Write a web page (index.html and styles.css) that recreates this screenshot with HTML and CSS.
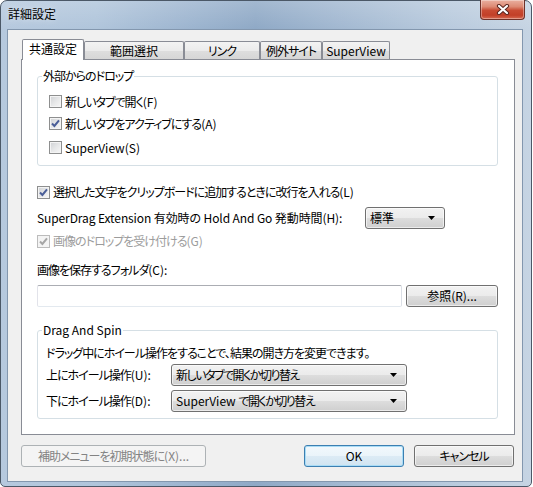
FILE: index.html
```html
<!DOCTYPE html>
<html lang="ja">
<head>
<meta charset="utf-8">
<title>詳細設定</title>
<link rel="stylesheet" href="styles.css">
</head>
<body>
<div class="window">
  <div class="titlebar">
    <span class="title">詳細設定</span>
    <div class="close">
      <svg width="14" height="11" viewBox="0 0 14 11"><path d="M3 2 L11 9 M11 2 L3 9" stroke="#5a2620" stroke-width="4.2" stroke-linecap="round"/><path d="M3 2 L11 9 M11 2 L3 9" stroke="#ffffff" stroke-width="2.2" stroke-linecap="round"/></svg>
    </div>
  </div>
  <div class="client">
    <div class="tabs">
      <div class="tab active">共通設定</div>
      <div class="tab t-range">範囲選択</div>
      <div class="tab t-link ja">リンク</div>
      <div class="tab t-exc ja">例外サイト</div>
      <div class="tab t-sv">SuperView</div>
    </div>
    <div class="panel">
      <fieldset class="group g-drop">
        <legend class="ja">外部からのドロップ</legend>
        <div class="group-body drop-body">
          <div class="check cr1"><span class="box"></span><span><span class="ja">新しいタブで開く</span>(F)</span></div>
          <div class="check cr2"><span class="box"><svg width="11" height="11" viewBox="0 0 11 11"><path d="M2 5.5 L4.4 8 L9 2.3" fill="none" stroke="#4a5e98" stroke-width="2"/></svg></span><span><span class="ja">新しいタブをアクティブにする</span>(A)</span></div>
          <div class="check cr3"><span class="box"></span><span>SuperView(S)</span></div>
        </div>
      </fieldset>

      <div class="check row22 r-l"><span class="box"><svg width="11" height="11" viewBox="0 0 11 11"><path d="M2 5.5 L4.4 8 L9 2.3" fill="none" stroke="#4a5e98" stroke-width="2"/></svg></span><span><span class="ja">選択した文字をクリップボードに追加するときに改行を入れる</span>(L)</span></div>

      <div class="row22 r-h">
        <span class="hold-label">SuperDrag Extension 有効時の Hold And Go 発動時間(H):</span>
        <div class="combo c-std"><span>標準</span><svg class="arrow" width="7" height="4" viewBox="0 0 7 4"><polygon points="0,0 7,0 3.5,4" fill="#000"/></svg></div>
      </div>

      <div class="check row22 r-g disabled"><span class="box"><svg width="11" height="11" viewBox="0 0 11 11"><path d="M2 5.5 L4.4 8 L9 2.3" fill="none" stroke="#a6a6a6" stroke-width="2"/></svg></span><span><span class="ja">画像のドロップを受け付ける</span>(G)</span></div>

      <div class="row22 r-c"><span class="ja">画像を保存するフォルダ</span>(C):</div>

      <div class="path-row">
        <div class="textbox"></div>
        <div class="btn browse">参照(R)...</div>
      </div>

      <fieldset class="group g-spin">
        <legend>Drag And Spin</legend>
        <div class="group-body spin-body">
          <div class="row22 ja">ドラッグ中にホイール操作をすることで、結果の開き方を変更できます。</div>
          <div class="row22 spin-row">
            <span class="spin-label"><span class="ja">上にホイール操作</span>(U):</span>
            <div class="combo c-wide"><span class="ja2">新しいタブで開くか切り替え</span><svg class="arrow" width="7" height="4" viewBox="0 0 7 4"><polygon points="0,0 7,0 3.5,4" fill="#000"/></svg></div>
          </div>
          <div class="row22 spin-row r-down">
            <span class="spin-label"><span class="ja">下にホイール操作</span>(D):</span>
            <div class="combo c-wide"><span>SuperView <span class="ja2">で開くか切り替え</span></span><svg class="arrow" width="7" height="4" viewBox="0 0 7 4"><polygon points="0,0 7,0 3.5,4" fill="#000"/></svg></div>
          </div>
        </div>
      </fieldset>
    </div>
    <div class="footer">
      <div class="btn btn-disabled reset"><span class="ja">補助メニューを初期状態に</span>(X)...</div>
      <div class="footer-right">
        <div class="btn btn-default ok">OK</div>
        <div class="btn cancel ja">キャンセル</div>
      </div>
    </div>
  </div>
</div>
</body>
</html>
```

FILE: styles.css
```css
* { box-sizing: border-box; }
html, body { margin: 0; padding: 0; }
body {
  width: 533px;
  height: 487px;
  overflow: hidden;
  background: #ffffff;
  font-family: "Noto Sans CJK JP", "Noto Sans", sans-serif;
  font-size: 12px;
  color: #000;
  font-feature-settings: "palt";
}

.ja { letter-spacing: -1px; }
.ja2 { letter-spacing: -1.5px; }

.window {
  width: 532px;
  height: 487px;
  border: 1px solid #4b5867;
  border-radius: 7px 7px 5px 5px;
  background:
    linear-gradient(180deg, rgba(255,255,255,0.18) 0px, rgba(255,255,255,0) 28px),
    linear-gradient(90deg, #b6c9de 0%, #b0c5db 18%, #9cb4cf 36%, #8fa9c6 48%, #a2b8d1 64%, #b8cadd 84%, #c6d4e3 100%);
  display: flex;
  flex-direction: column;
  padding: 0 8px 4px 6px;
}

.titlebar {
  height: 28px;
  display: flex;
  align-items: flex-start;
  flex-shrink: 0;
}
.title {
  margin-left: 1px;
  margin-top: 5px;
  line-height: 16px;
  font-size: 12px;
  text-shadow: 0 0 6px rgba(255,255,255,0.6);
}
.close {
  margin-left: auto;
  margin-right: -2px;
  margin-top: -1px;
  width: 45px;
  height: 20px;
  border: 1px solid #6e3129;
  border-top: none;
  border-radius: 0 0 4px 4px;
  background: linear-gradient(180deg, #eab0a0 0%, #dd8a74 35%, #c84a32 55%, #c23f28 80%, #d66a52 100%);
  box-shadow: inset 0 0 0 1px rgba(255,255,255,0.35);
  display: flex;
  align-items: center;
  justify-content: center;
}

.client {
  width: 516px;
  height: 453px;
  flex-shrink: 0;
  border: 1px solid #8397ae;
  background: #f0f0f0;
  padding: 9px 0 0 13px;
}

.tabs {
  display: flex;
  height: 20px;
  margin-left: 1px;
  align-items: flex-start;
}
.tab {
  height: 18px;
  margin-top: 2px;
  border: 1px solid #898c95;
  border-bottom: none;
  border-radius: 2px 2px 0 0;
  background: linear-gradient(180deg, #f3f3f3 0%, #ebebeb 50%, #dedede 51%, #d6d6d6 100%);
  text-align: center;
  line-height: 16px;
  padding-top: 1px;
  white-space: nowrap;
}
.tab.active {
  height: 21px;
  margin-top: 0;
  width: 62px;
  background: #ffffff;
  position: relative;
  z-index: 1;
  line-height: 18px;
  padding-top: 0;
}
.t-range { width: 100px; }
.t-link { width: 76px; }
.t-exc { width: 62px; }
.t-sv { width: 68px; }

.panel {
  width: 494px;
  height: 376px;
  border: 1px solid #898c95;
  background: #ffffff;
  padding: 8px 16px 0 15px;
}

.group {
  margin: 0;
  padding: 0;
  border: 1px solid #d5dfe5;
  border-radius: 3px;
  min-width: 0;
}
.group legend {
  margin-left: 4px;
  padding: 0 1px;
  line-height: 16px;
  height: 16px;
}
.drop-body { padding: 5px 0 4px 11px; }
.spin-body { padding: 4px 0 6px 8px; }

.cr1 { height: 24px; }
.cr2 { height: 21px; }
.cr3 { height: 27px; }
.row22 { height: 22px; line-height: 22px; }

.check {
  display: flex;
  align-items: center;
  gap: 3px;
  white-space: nowrap;
}
.box {
  width: 13px;
  height: 13px;
  flex-shrink: 0;
  border: 1px solid #8e8f8f;
  background: linear-gradient(135deg, #cfd1d4 0%, #e6e7e8 50%, #f7f7f7 100%);
  box-shadow: inset 0 0 0 1px #f4f4f4;
}
.box svg { display: block; }
.disabled { color: #9c9c9c; }
.disabled .box {
  border-color: #bcbcbc;
  background: #f4f4f4;
  box-shadow: none;
}

.r-l { margin-top: 15px; }
.r-h {
  margin-top: 4px;
  display: flex;
  align-items: center;
  white-space: nowrap;
}
.hold-label { width: 328px; flex-shrink: 0; letter-spacing: -0.1px; }
.r-g { margin-top: 1px; }
.r-c { margin-top: 7px; }

.combo {
  height: 22px;
  border: 1px solid #707070;
  border-radius: 3px;
  background: linear-gradient(180deg, #f2f2f2 0%, #ebebeb 50%, #dddddd 51%, #cfcfcf 100%);
  box-shadow: inset 0 0 0 1px rgba(255,255,255,0.6);
  display: flex;
  align-items: center;
  padding: 0 9px 0 4px;
  line-height: 20px;
  white-space: nowrap;
}
.combo .arrow { margin-left: auto; flex-shrink: 0; }
.c-std { width: 80px; }
.c-wide { width: 236px; }

.path-row {
  margin-top: 4px;
  display: flex;
  gap: 4px;
  height: 22px;
}
.textbox {
  width: 365px;
  height: 22px;
  border: 1px solid;
  border-color: #abadb3 #dbdfe6 #e3e9ef #e2e3ea;
  border-radius: 2px;
  background: #fff;
}

.btn {
  height: 22px;
  border: 1px solid #707070;
  border-radius: 3px;
  background: linear-gradient(180deg, #f2f2f2 0%, #ebebeb 50%, #dddddd 51%, #cfcfcf 100%);
  box-shadow: inset 0 0 0 1px rgba(255,255,255,0.6);
  text-align: center;
  line-height: 20px;
  white-space: nowrap;
}
.browse { width: 92px; }

.g-spin { margin-top: 15px; }
.spin-row {
  display: flex;
  align-items: center;
  white-space: nowrap;
}
.spin-label { width: 125px; flex-shrink: 0; }
.r-down { margin-top: 4px; }

.footer {
  width: 494px;
  margin-top: 10px;
  display: flex;
  justify-content: space-between;
}
.footer-right {
  display: flex;
  gap: 10px;
  margin-right: 1px;
}
.reset { width: 185px; }
.ok { width: 100px; }
.cancel { width: 100px; }
.btn-disabled {
  border-color: #adb2b5;
  background: #f4f4f4;
  box-shadow: none;
  color: #838383;
}
.btn-default {
  border-color: #3c7fb1;
  box-shadow: inset 0 0 0 1px #a9dcf6;
  background: linear-gradient(180deg, #f2f8fc 0%, #eaf4fa 50%, #dcebf5 51%, #d0e4f1 100%);
}
```
